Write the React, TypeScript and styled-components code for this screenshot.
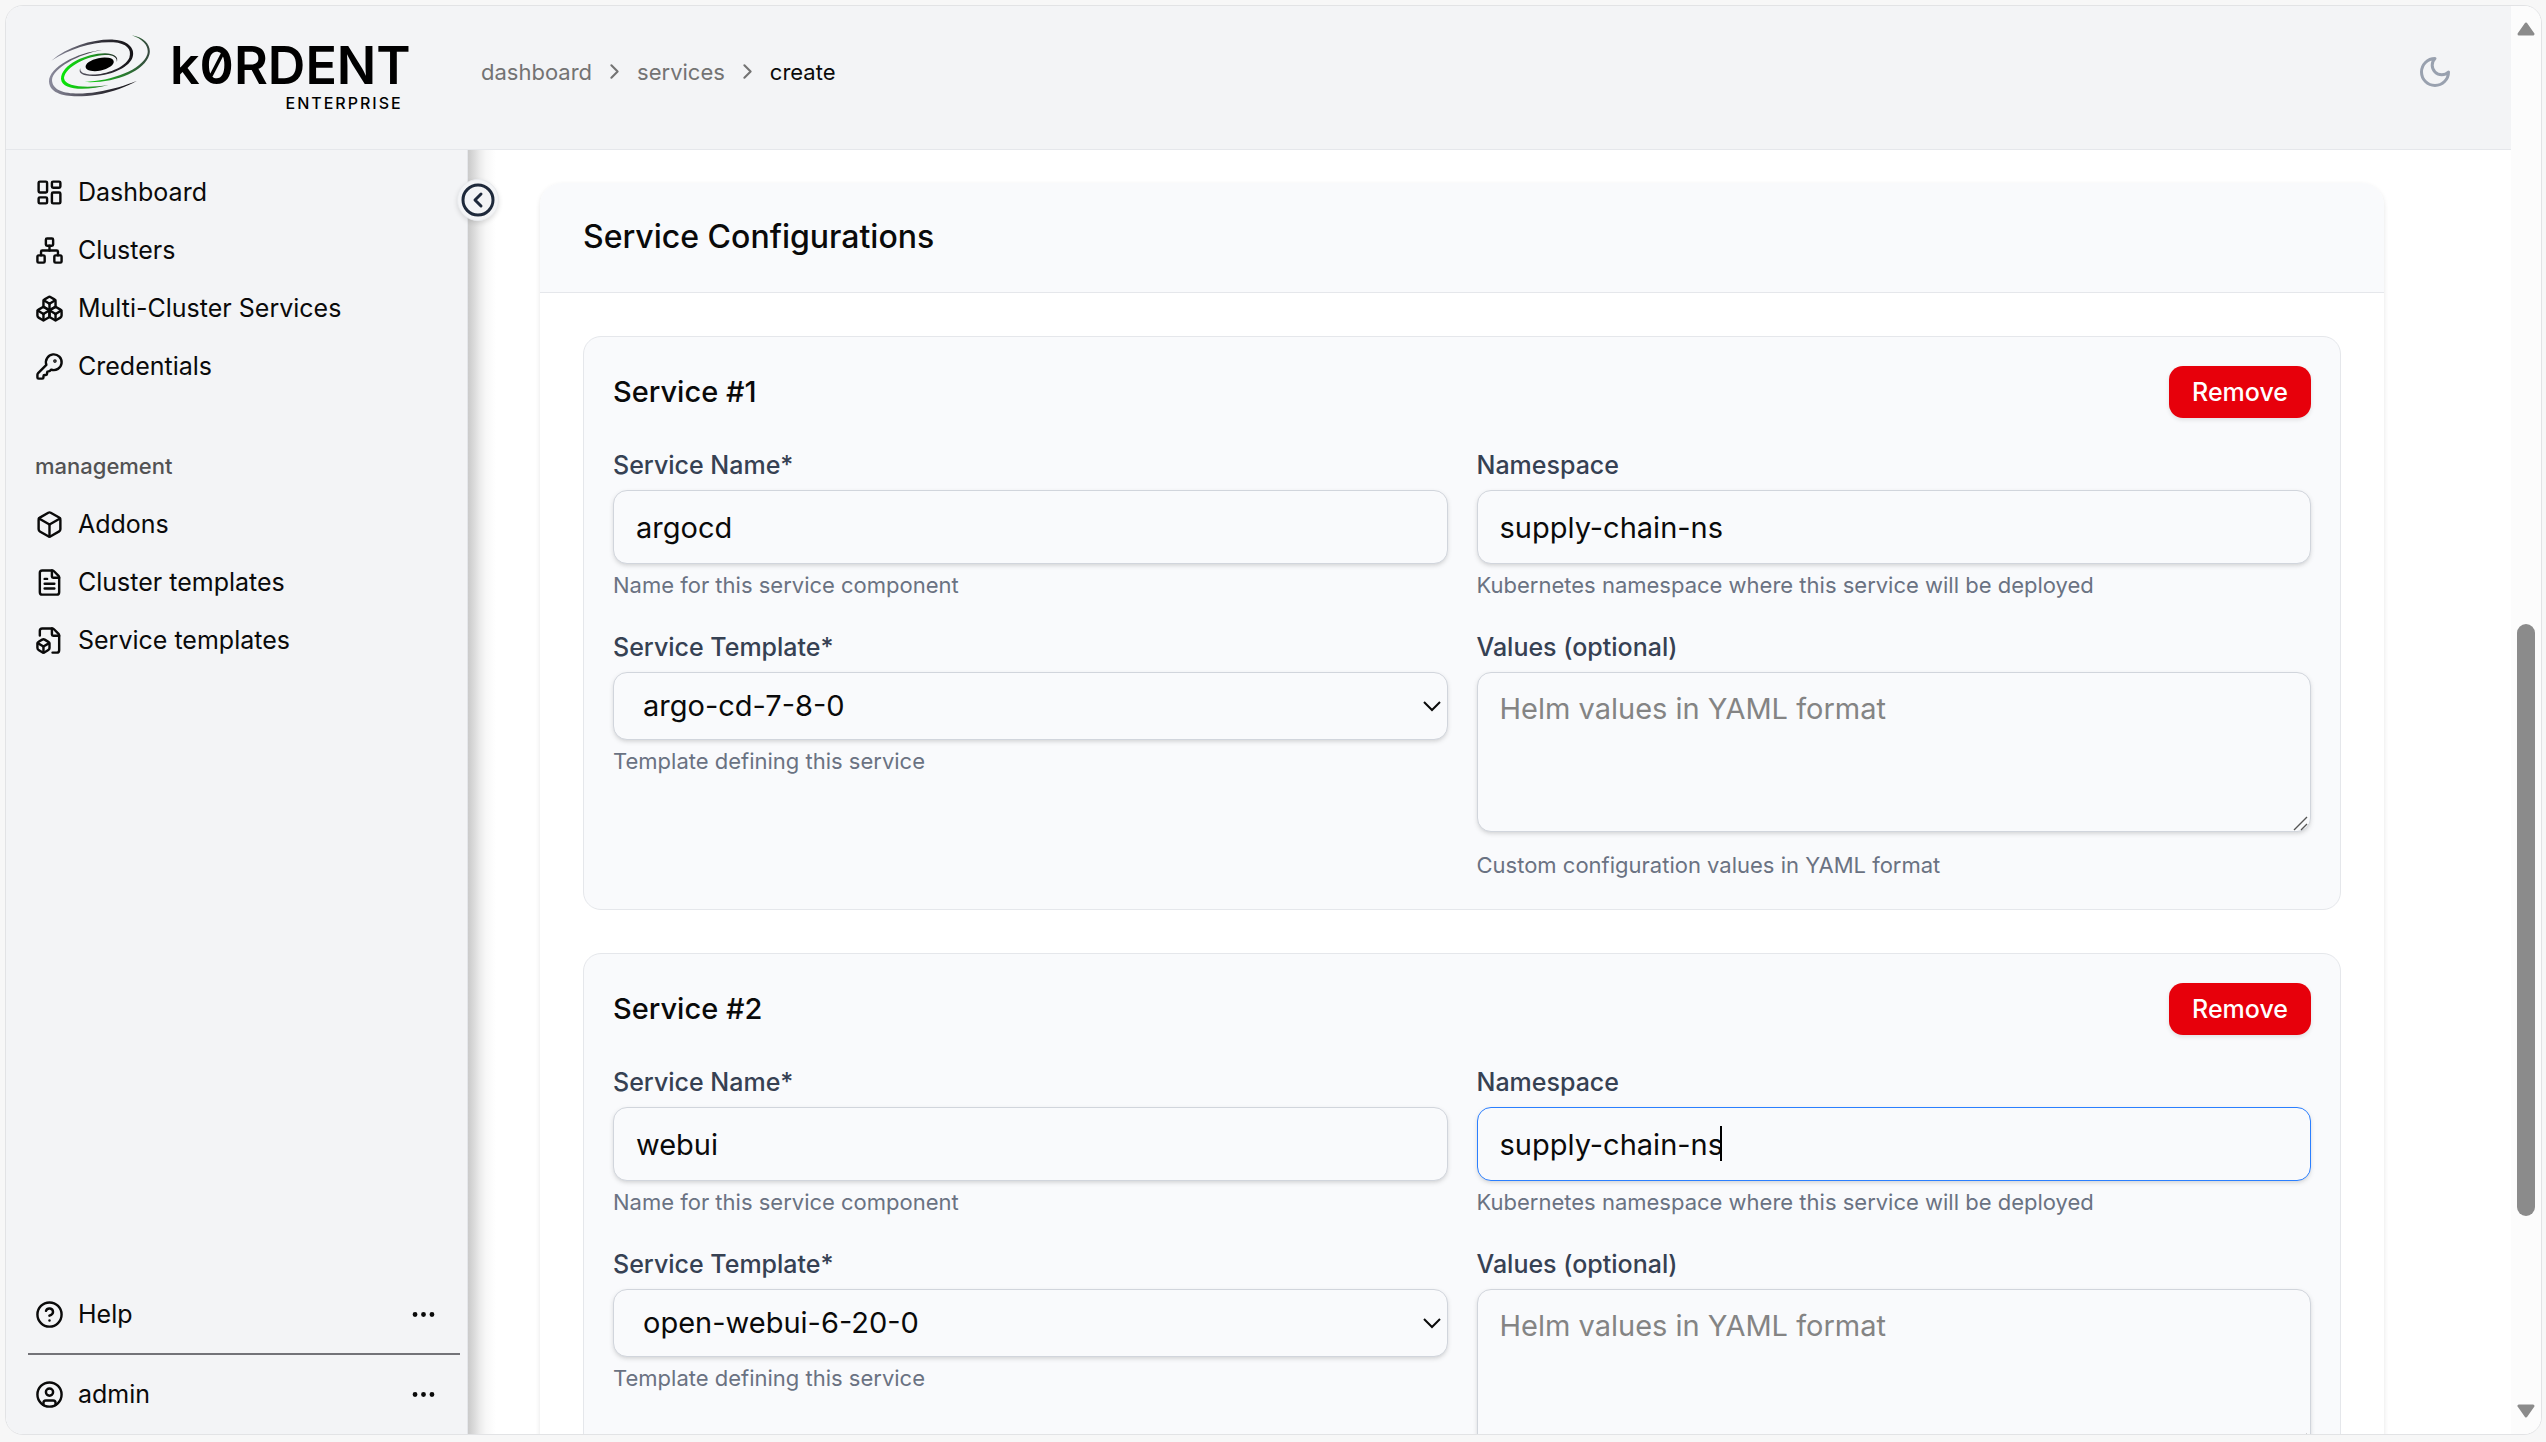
import React, { useState } from 'react';
import styled, { createGlobalStyle, css } from 'styled-components';
import {
  Box,
  Boxes,
  ChevronRight,
  CircleChevronLeft,
  CircleHelp,
  CircleUser,
  Ellipsis,
  FileBox,
  FileText,
  KeyRound,
  LayoutDashboard,
  Network,
  type LucideIcon,
} from 'lucide-react';

const color = {
  page: '#f7f7f7',
  panel: '#f3f4f6',
  card: '#f9fafc',
  ink: '#0a0a0a',
  muted: '#737373',
  label: '#364153',
  hint: '#6a7282',
  line: '#e5e7eb',
  field: '#d1d5dc',
  focus: '#2b7fff',
  danger: '#e7000b',
};

const GlobalStyle = createGlobalStyle`
  *, *::before, *::after { box-sizing: border-box; }
  body {
    margin: 0;
    background: ${color.page};
    color: ${color.ink};
    font-family: Inter, "Liberation Sans", sans-serif;
    font-size: 25px;
    line-height: 36px;
  }
  h1, h2, p, ul { margin: 0; padding: 0; font-weight: 400; }
  button, input, select, textarea { font: inherit; color: inherit; }
  svg { display: block; flex: none; }
`;

const Page = styled.div`
  height: 100vh;
  padding: 5px 4px 7px 5px;
`;

const Frame = styled.div`
  display: flex;
  height: 100%;
  overflow: hidden;
  background: #fff;
  border: 1px solid #e2e3e5;
  border-radius: 18px;
`;

const Shell = styled.div`
  flex: 1;
  min-width: 0;
  display: flex;
  flex-direction: column;
`;

const Header = styled.header`
  flex: none;
  display: flex;
  align-items: center;
  height: 144px;
  padding: 0 58px 12px 0;
  background: ${color.panel};
  border-bottom: 1px solid ${color.line};
`;

const Brand = styled.a`
  flex: none;
  display: flex;
  width: 462px;
  padding-left: 43px;
  gap: 19px;
  color: #000;
  text-decoration: none;
`;

const Wordmark = styled.span`
  display: flex;
  flex-direction: column;
`;

const BrandName = styled.span`
  font-size: 52px;
  line-height: 62px;
  font-weight: 600;
  font-feature-settings: 'zero' 1;
`;

const Edition = styled.span`
  align-self: flex-end;
  padding-right: 8px;
  font-size: 16px;
  line-height: 12px;
  font-weight: 500;
  letter-spacing: 2px;
`;

const Breadcrumbs = styled.nav`
  flex: 1;
  display: flex;
  align-items: center;
  gap: 10px;
  padding-left: 13px;
  font-size: 22px;
  color: ${color.muted};
`;

const Crumb = styled.a`
  color: inherit;
  text-decoration: none;
`;

const CurrentCrumb = styled.span`
  color: ${color.ink};
`;

const ThemeButton = styled.button`
  padding: 0;
  border: 0;
  background: none;
  color: #99a1af;
  cursor: pointer;
`;

const Body = styled.div`
  flex: 1;
  min-height: 0;
  display: flex;
`;

const Sidebar = styled.aside`
  position: relative;
  flex: none;
  display: flex;
  flex-direction: column;
  width: 462px;
  padding: 17px 7px 15px 22px;
  background: ${color.panel};
  border-right: 1px solid ${color.line};
`;

const CollapseButton = styled.button`
  position: absolute;
  top: 29px;
  right: -32px;
  z-index: 1;
  display: grid;
  place-items: center;
  width: 42px;
  height: 42px;
  padding: 0;
  border: 1px solid #e9ebee;
  border-radius: 50%;
  background: ${color.panel};
  box-shadow: 0 2px 5px rgba(0, 0, 0, 0.12);
  color: #1e293b;
  cursor: pointer;
`;

const NavList = styled.ul`
  display: flex;
  flex-direction: column;
  gap: 8px;
  list-style: none;
`;

const navRow = css`
  display: flex;
  align-items: center;
  gap: 14px;
  width: 100%;
  height: 50px;
  padding: 0 22px 0 7px;
  color: inherit;
`;

const NavLink = styled.a`
  ${navRow}
  text-decoration: none;
`;

const MenuButton = styled.button`
  ${navRow}
  border: 0;
  background: none;
  text-align: left;
  cursor: pointer;
`;

const MenuText = styled.span`
  flex: 1;
`;

const GroupLabel = styled.p`
  margin: 57px 0 15px;
  padding-left: 7px;
  font-size: 22px;
  font-weight: 500;
  color: #525253;
`;

const SidebarFooter = styled.div`
  margin-top: auto;
`;

const Divider = styled.hr`
  height: 2px;
  margin: 14px 0;
  border: 0;
  background: #737378;
`;

const Main = styled.main`
  flex: 1;
  min-width: 0;
  overflow-y: auto;
  scrollbar-width: none;
  padding: 33px 127px 0 72px;
  background: linear-gradient(
    to right,
    #cacaca 0,
    #dadada 6px,
    #ececec 12px,
    #f8f8f8 18px,
    #fff 28px
  );
`;

const Card = styled.section`
  background: #fff;
  border-radius: 22px;
  box-shadow: 0 2px 5px rgba(0, 0, 0, 0.1);
`;

const CardHeader = styled.div`
  padding: 32px 43px 33px;
  background: ${color.card};
  border-bottom: 1px solid ${color.line};
  border-radius: 22px 22px 0 0;
`;

const CardTitle = styled.h1`
  font-size: 32px;
  line-height: 44px;
  font-weight: 500;
`;

const CardBody = styled.div`
  display: flex;
  flex-direction: column;
  gap: 43px;
  padding: 43px;
`;

const ServiceBox = styled.section`
  display: flex;
  flex-direction: column;
  gap: 29px;
  padding: 29px;
  background: ${color.card};
  border: 1px solid ${color.line};
  border-radius: 18px;
`;

const ServiceHead = styled.div`
  display: flex;
  align-items: center;
  justify-content: space-between;
`;

const ServiceTitle = styled.h2`
  font-size: 29px;
  line-height: 52px;
  font-weight: 500;
`;

const RemoveButton = styled.button`
  height: 52px;
  padding: 0 23px;
  border: 0;
  border-radius: 14px;
  background: ${color.danger};
  box-shadow: 0 2px 4px rgba(0, 0, 0, 0.1);
  color: #fff;
  font-weight: 500;
  cursor: pointer;
`;

const FieldGrid = styled.div`
  display: grid;
  grid-template-columns: 1fr 1fr;
  gap: 29px;
  align-items: start;
`;

const Field = styled.div`
  display: flex;
  flex-direction: column;
  gap: 7px;
`;

const Label = styled.label`
  font-weight: 500;
  color: ${color.label};
`;

const Hint = styled.p`
  font-size: 22px;
  line-height: 29px;
  color: ${color.hint};
`;

const control = css`
  display: block;
  width: 100%;
  margin: 0;
  border: 1px solid ${color.field};
  border-radius: 14px;
  background: ${color.card};
  box-shadow: 0 2px 5px rgba(0, 0, 0, 0.1), 0 2px 4px -2px rgba(0, 0, 0, 0.1);
  font-size: 29px;
  outline: none;
`;

const InputWrap = styled.div`
  position: relative;
`;

const Input = styled.input<{ $active?: boolean }>`
  ${control}
  height: 74px;
  padding: 0 22px;
  ${(p) =>
    p.$active &&
    css`
      border-color: ${color.focus};
      caret-color: transparent;
    `}
`;

const Caret = styled.span`
  position: absolute;
  top: 19px;
  left: 243px;
  width: 2px;
  height: 35px;
  background: #000;
`;

const ControlStack = styled.div<{ $spaced?: boolean }>`
  display: grid;
  margin-bottom: ${(p) => (p.$spaced ? 12 : 0)}px;
  > * {
    grid-area: 1 / 1;
  }
  > svg {
    pointer-events: none;
    justify-self: end;
  }
`;

const Select = styled.select`
  ${control}
  appearance: none;
  height: 68px;
  padding: 0 60px 0 29px;
`;

const SelectArrow = styled.svg`
  align-self: center;
  margin-right: 7px;
`;

const Textarea = styled.textarea`
  ${control}
  height: 160px;
  padding: 14px 22px;
  line-height: 43px;
  resize: none;
  &::placeholder {
    color: #848484;
  }
`;

const ResizeGrip = styled.svg`
  align-self: end;
  margin: 0 2px 1px 0;
`;

const ScrollTrack = styled.div`
  flex: none;
  display: grid;
  grid-template-rows: 14px 588fr 592fr 188fr 14px;
  justify-items: center;
  width: 30px;
  padding: 16px 0;
  background: #fcfcfc;
`;

const ScrollThumb = styled.div`
  grid-row: 3;
  width: 18px;
  border-radius: 9px;
  background: #8b8b8b;
`;

const ScrollArrow = styled.svg<{ $end?: boolean }>`
  grid-row: ${(p) => (p.$end ? 5 : 1)};
  transform: ${(p) => (p.$end ? 'rotate(180deg)' : 'none')};
`;

function Galaxy() {
  return (
    <svg width="102" height="62" viewBox="147 104 306 186" aria-hidden="true">
      <defs>
        <linearGradient id="arm" x1="0" x2="1">
          <stop offset="0" stopColor="#8b8b9c" />
          <stop offset="0.6" stopColor="#33313a" />
          <stop offset="1" stopColor="#141216" />
        </linearGradient>
        <linearGradient id="lime" x1="0" x2="1">
          <stop offset="0" stopColor="#08e808" />
          <stop offset="0.5" stopColor="#1ea81e" />
          <stop offset="0.85" stopColor="#26502c" />
          <stop offset="1" stopColor="#1b1b1f" />
        </linearGradient>
        <linearGradient id="tail" x1="0" x2="1">
          <stop offset="0" stopColor="#0edb0e" />
          <stop offset="0.5" stopColor="#268a2b" />
          <stop offset="1" stopColor="#36473f" />
        </linearGradient>
      </defs>
      <path
        fill="url(#arm)"
        d="M154 181C205 138 283 115 342 118C389 121 407 148 397 173C382 211 300 235 256 225C240 221 236 213 241 204C240 214 247 219 260 221C300 229 373 206 388 172C396 147 380 129 340 126C285 122 214 142 154 181Z"
      />
      <path
        fill="url(#arm)"
        d="M309 148C228 157 147 201 147 243C148 289 219 294 290 283C338 275 381 259 411 241C378 255 337 267 290 275C225 285 157 281 156 239C158 204 234 161 309 148Z"
      />
      <path
        fill="url(#lime)"
        d="M350 186C358 170 340 159 315 159C258 160 184 192 183 236C186 273 266 270 326 254C266 263 194 262 192 233C196 199 262 166 315 164C339 163 353 171 350 186Z"
      />
      <path
        fill="url(#tail)"
        d="M395 105C437 112 455 139 448 163C433 214 341 250 254 245C335 242 426 209 442 162C448 140 432 117 395 105Z"
      />
      <ellipse cx="299" cy="192" rx="43" ry="19" transform="rotate(-12 299 192)" />
    </svg>
  );
}

function Moon() {
  return (
    <svg
      width="36"
      height="36"
      viewBox="0 0 24 24"
      fill="none"
      stroke="currentColor"
      strokeWidth="2"
      strokeLinecap="round"
      strokeLinejoin="round"
      aria-hidden="true"
    >
      <path d="M12 3a6 6 0 0 0 9 9 9 9 0 1 1-9-9Z" />
    </svg>
  );
}

type NavEntry = { text: string; icon: LucideIcon };

const mainNav: NavEntry[] = [
  { text: 'Dashboard', icon: LayoutDashboard },
  { text: 'Clusters', icon: Network },
  { text: 'Multi-Cluster Services', icon: Boxes },
  { text: 'Credentials', icon: KeyRound },
];

const managementNav: NavEntry[] = [
  { text: 'Addons', icon: Box },
  { text: 'Cluster templates', icon: FileText },
  { text: 'Service templates', icon: FileBox },
];

function NavItems({ entries }: { entries: NavEntry[] }) {
  return (
    <NavList>
      {entries.map(({ text, icon: Icon }) => (
        <li key={text}>
          <NavLink href="#">
            <Icon size={29} />
            {text}
          </NavLink>
        </li>
      ))}
    </NavList>
  );
}

function MenuRow({ text, icon: Icon }: NavEntry) {
  return (
    <MenuButton type="button">
      <Icon size={29} />
      <MenuText>{text}</MenuText>
      <Ellipsis size={29} />
    </MenuButton>
  );
}

type Service = { name: string; namespace: string; template: string; active?: boolean };

const services: Service[] = [
  { name: 'argocd', namespace: 'supply-chain-ns', template: 'argo-cd-7-8-0' },
  { name: 'webui', namespace: 'supply-chain-ns', template: 'open-webui-6-20-0', active: true },
];

const templates = ['argo-cd-7-8-0', 'open-webui-6-20-0'];

function ServiceForm({ service, index }: { service: Service; index: number }) {
  const [name, setName] = useState(service.name);
  const [namespace, setNamespace] = useState(service.namespace);
  const [template, setTemplate] = useState(service.template);
  const [values, setValues] = useState('');
  const id = `service-${index}`;

  return (
    <ServiceBox>
      <ServiceHead>
        <ServiceTitle>{`Service #${index}`}</ServiceTitle>
        <RemoveButton type="button">Remove</RemoveButton>
      </ServiceHead>
      <FieldGrid>
        <Field>
          <Label htmlFor={`${id}-name`}>Service Name*</Label>
          <Input id={`${id}-name`} value={name} onChange={(e) => setName(e.target.value)} />
          <Hint>Name for this service component</Hint>
        </Field>
        <Field>
          <Label htmlFor={`${id}-namespace`}>Namespace</Label>
          <InputWrap>
            <Input
              id={`${id}-namespace`}
              $active={service.active}
              value={namespace}
              onChange={(e) => setNamespace(e.target.value)}
            />
            {service.active && <Caret />}
          </InputWrap>
          <Hint>Kubernetes namespace where this service will be deployed</Hint>
        </Field>
        <Field>
          <Label htmlFor={`${id}-template`}>Service Template*</Label>
          <ControlStack>
            <Select
              id={`${id}-template`}
              value={template}
              onChange={(e) => setTemplate(e.target.value)}
            >
              {templates.map((t) => (
                <option key={t}>{t}</option>
              ))}
            </Select>
            <SelectArrow width="18" height="12" viewBox="0 0 18 12" aria-hidden="true">
              <path d="M1 2L9 10L17 2" fill="none" stroke="#0a0a0a" strokeWidth="2" />
            </SelectArrow>
          </ControlStack>
          <Hint>Template defining this service</Hint>
        </Field>
        <Field>
          <Label htmlFor={`${id}-values`}>Values (optional)</Label>
          <ControlStack $spaced>
            <Textarea
              id={`${id}-values`}
              placeholder="Helm values in YAML format"
              value={values}
              onChange={(e) => setValues(e.target.value)}
            />
            <ResizeGrip width="16" height="16" viewBox="0 0 16 16" aria-hidden="true">
              <path d="M1 15L14 2M8 15L14 9" stroke="#555" strokeWidth="1.4" />
            </ResizeGrip>
          </ControlStack>
          <Hint>Custom configuration values in YAML format</Hint>
        </Field>
      </FieldGrid>
    </ServiceBox>
  );
}

export default function App() {
  return (
    <>
      <GlobalStyle />
      <Page>
        <Frame>
          <Shell>
            <Header>
              <Brand href="#">
                <Galaxy />
                <Wordmark>
                  <BrandName>k0RDENT</BrandName>
                  <Edition>ENTERPRISE</Edition>
                </Wordmark>
              </Brand>
              <Breadcrumbs aria-label="Breadcrumb">
                <Crumb href="#">dashboard</Crumb>
                <ChevronRight size={25} />
                <Crumb href="#">services</Crumb>
                <ChevronRight size={25} />
                <CurrentCrumb aria-current="page">create</CurrentCrumb>
              </Breadcrumbs>
              <ThemeButton type="button" aria-label="Toggle theme">
                <Moon />
              </ThemeButton>
            </Header>
            <Body>
              <Sidebar>
                <CollapseButton type="button" aria-label="Collapse sidebar">
                  <CircleChevronLeft size={36} />
                </CollapseButton>
                <NavItems entries={mainNav} />
                <GroupLabel>management</GroupLabel>
                <NavItems entries={managementNav} />
                <SidebarFooter>
                  <MenuRow text="Help" icon={CircleHelp} />
                  <Divider />
                  <MenuRow text="admin" icon={CircleUser} />
                </SidebarFooter>
              </Sidebar>
              <Main>
                <Card>
                  <CardHeader>
                    <CardTitle>Service Configurations</CardTitle>
                  </CardHeader>
                  <CardBody>
                    {services.map((service, i) => (
                      <ServiceForm key={service.name} service={service} index={i + 1} />
                    ))}
                  </CardBody>
                </Card>
              </Main>
            </Body>
          </Shell>
          <ScrollTrack aria-hidden="true">
            <ScrollArrow width="18" height="14" viewBox="0 0 18 14">
              <path
                d="M9 2L16 12H2Z"
                fill="#8b8b8b"
                stroke="#8b8b8b"
                strokeWidth="3"
                strokeLinejoin="round"
              />
            </ScrollArrow>
            <ScrollThumb />
            <ScrollArrow $end width="18" height="14" viewBox="0 0 18 14">
              <path
                d="M9 2L16 12H2Z"
                fill="#8b8b8b"
                stroke="#8b8b8b"
                strokeWidth="3"
                strokeLinejoin="round"
              />
            </ScrollArrow>
          </ScrollTrack>
        </Frame>
      </Page>
    </>
  );
}
